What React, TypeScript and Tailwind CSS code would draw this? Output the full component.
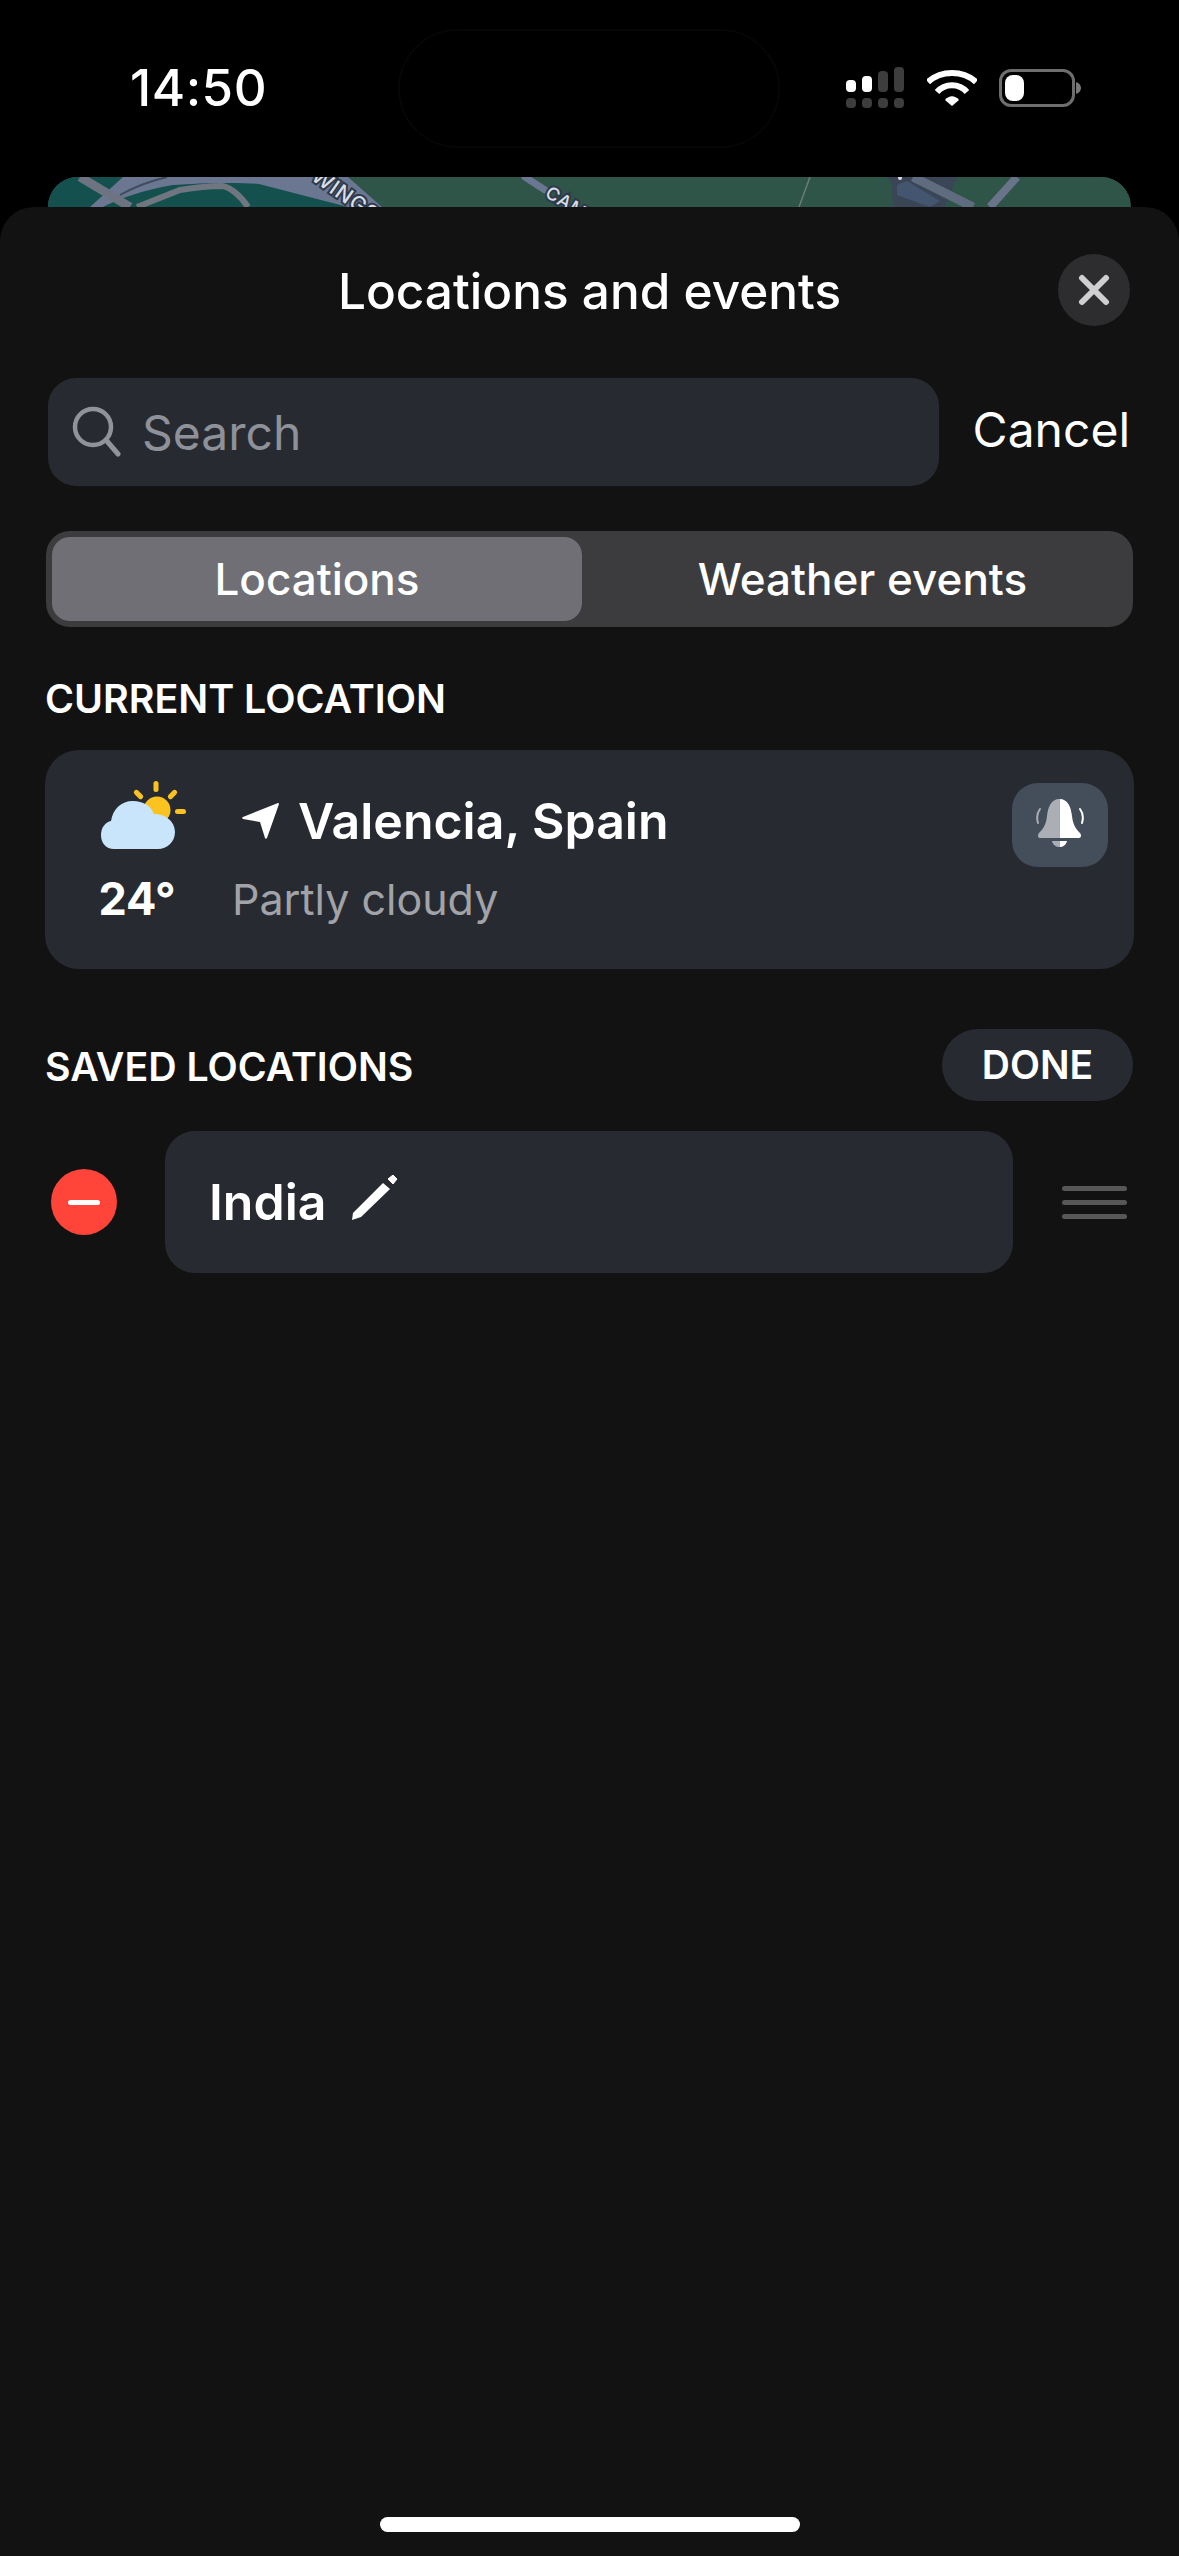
const F = "font-['Inter','Liberation_Sans',sans-serif]";

function Signal() {
  return (
    <svg width="60" height="42" viewBox="0 0 60 42" className="block">
      <rect x="0" y="13" width="10" height="12" rx="4" fill="#fff" />
      <rect x="16" y="9" width="10" height="16" rx="4" fill="#fff" />
      <rect x="32" y="4" width="10" height="21" rx="4" fill="#3d3d3d" />
      <rect x="48" y="0" width="10" height="25" rx="4" fill="#3d3d3d" />
      <rect x="0" y="31" width="10" height="10" rx="4" fill="#3d3d3d" />
      <rect x="16" y="31" width="10" height="10" rx="4" fill="#3d3d3d" />
      <rect x="32" y="31" width="10" height="10" rx="4" fill="#3d3d3d" />
      <rect x="48" y="31" width="10" height="10" rx="4" fill="#3d3d3d" />
    </svg>
  );
}

function Wifi() {
  return (
    <svg width="50" height="38" viewBox="0 0 50 38" className="block">
      <path d="M1 13 C14 1 36 1 49 13" fill="none" stroke="#fff" strokeWidth="6" />
      <path d="M10 23 C18 14 32 14 40 23" fill="none" stroke="#fff" strokeWidth="6" />
      <path d="M18 31 C22 26 28 26 32 31 L25 37 Z" fill="#fff" />
    </svg>
  );
}

function Battery() {
  return (
    <div className="flex items-center">
      <div className="w-[76px] h-[38px] rounded-[12px] border-[3px] border-[#6e6e6e] p-[3px] flex">
        <div className="w-[19px] h-full rounded-[8px] bg-white" />
      </div>
      <svg width="5" height="12" viewBox="0 0 5 12" className="ml-[1px] block">
        <path d="M0 0 C3 1 5 3 5 6 C5 9 3 11 0 12 Z" fill="#7a7a7a" />
      </svg>
    </div>
  );
}

function MapStrip() {
  return (
    <div className="h-[70px] mx-[48px] rounded-t-[30px] overflow-hidden -mb-[40px] bg-[#2f5448]">
      <svg width="1082" height="70" viewBox="0 0 1082 70" className="block">
        <rect width="1082" height="70" fill="#2f5448" />
        <path d="M0 0 H300 L334 30 H0 Z" fill="#14504e" />
        <path d="M75 0 H300 L334 30 H300 L211 7 C190 5 150 6 125 8 C95 13 70 22 55 30 H42 Z" fill="#6b7690" />
        <path d="M72 18 C88 9 102 4 119 0" stroke="#3f4c5c" strokeWidth="2" fill="none" />
        <path d="M32 0 L82 30" stroke="#6d7380" strokeWidth="9" fill="none" />
        <path d="M89 30 L132 13 C150 10 160 9 174 9 C182 10 192 18 200 30" stroke="#6f7680" strokeWidth="6" fill="none" />
        <text x="262" y="2" transform="rotate(35 262 2)" fontSize="21" fontFamily="Inter" fontWeight="500" letterSpacing="1" fill="#d8dde6" stroke="#2e3a49" strokeWidth="4" paintOrder="stroke">WINGS</text>
        <path d="M477 0 L497 13" stroke="#6b7690" strokeWidth="7" strokeLinecap="round" fill="none" />
        <text x="496" y="19" transform="rotate(32 496 19)" fontSize="18" fontFamily="Inter" fontWeight="500" letterSpacing="1" fill="#d8dde6" stroke="#2e3a49" strokeWidth="4" paintOrder="stroke">CAMI</text>
        <path d="M762 0 L751 30" stroke="#6a7d78" strokeWidth="1.5" fill="none" />
        <path d="M840 0 H909 L897 30 H845 L844 8 Z" fill="#3a4656" />
        <path d="M849 8 L859 4 L892 24 L882 30 L849 18 Z" fill="#44566f" />
        <path d="M865 0 L925 30" stroke="#5f6c80" strokeWidth="9" fill="none" />
        <path d="M969 0 L942 30" stroke="#69748a" strokeWidth="8" fill="none" />
        <circle cx="852" cy="1" r="2" fill="#d8dde6" />
      </svg>
    </div>
  );
}

export default function App() {
  return (
    <div className={`w-[1179px] h-[2556px] bg-black overflow-hidden relative text-white ${F}`}>
      <div className="h-[177px] relative">
        <div className="absolute left-[398px] top-[29px] w-[382px] h-[119px] rounded-[60px] border-2 border-[#060606]" />
        <div className="flex items-center pl-[130px] pr-[98px] pt-[60px]">
          <span className="text-[51px] leading-[56px] font-medium tracking-[0.5px]">14:50</span>
          <div className="ml-auto flex items-center">
            <Signal />
            <div className="ml-[21px]"><Wifi /></div>
            <div className="ml-[22px]"><Battery /></div>
          </div>
        </div>
      </div>

      <MapStrip />

      <div className="relative h-[2349px] bg-[#121212] rounded-t-[34px]">
        <div className="h-[171px] relative flex justify-center pt-[54px]">
          <span className="text-[49.5px] leading-[60px] font-medium">Locations and events</span>
          <div className="absolute right-[49px] top-[47px] w-[72px] h-[72px] rounded-full bg-[#2d2d2f] flex items-center justify-center">
            <svg width="32" height="32" viewBox="0 0 32 32">
              <path d="M4 4 L28 28 M28 4 L4 28" stroke="#cfcfd2" strokeWidth="6" strokeLinecap="round" />
            </svg>
          </div>
        </div>

        <div className="flex items-center ml-[48px] mr-[49px]">
          <div className="w-[891px] h-[108px] rounded-[28px] bg-[#272b31] flex items-center pl-[23px]">
            <svg width="52" height="52" viewBox="0 0 52 52" className="mt-[-2px]">
              <circle cx="22" cy="22" r="18" fill="none" stroke="#90939b" strokeWidth="4.5" />
              <path d="M35 35 L47 49" stroke="#90939b" strokeWidth="5" strokeLinecap="round" />
            </svg>
            <span className="ml-[19px] text-[48px] leading-[60px] text-[#8e9199] mt-[2px]">Search</span>
          </div>
          <span className="ml-auto text-[48px] leading-[60px] mt-[-4px]">Cancel</span>
        </div>

        <div className="mt-[45px] mx-[46px] h-[96px] rounded-[24px] bg-[#3c3c3e] flex p-[6px]">
          <div className="w-[530px] rounded-[18px] bg-[#6f6f75] flex items-center justify-center">
            <span className="text-[44px] leading-[56px] font-medium">Locations</span>
          </div>
          <div className="flex-1 flex items-center justify-center pl-[16px]">
            <span className="text-[44px] leading-[56px] font-medium">Weather events</span>
          </div>
        </div>

        <div className="mt-[47px] ml-[45px] text-[39.4px] leading-[50px] font-semibold">CURRENT LOCATION</div>

        <div className="mt-[26px] mx-[45px] h-[219px] rounded-[34px] bg-[#272b31] relative flex">
          <div className="w-[187px] flex flex-col items-center shrink-0">
            <svg width="86" height="69" viewBox="0 0 86 69" className="mt-[31px] ml-[11px] block">
              <circle cx="56" cy="29" r="13.5" fill="#fbc31f" />
              <rect x="52.5" y="0" width="5" height="11" rx="2.5" fill="#fbc31f" />
              <rect x="35" y="8" width="5" height="11" rx="2.5" fill="#fbc31f" transform="rotate(-45 37.5 13.5)" />
              <rect x="69" y="8" width="5" height="11" rx="2.5" fill="#fbc31f" transform="rotate(45 71.5 13.5)" />
              <rect x="74" y="28" width="11" height="5" rx="2.5" fill="#fbc31f" />
              <path d="M13 68 C5 68 0 62 0 54 C0 46 5 41 10 40 C12 28 20 20 32 20 C42 20 50 25 53 33 C64 33 74 40 74 51 C74 61 66 68 57 68 Z" fill="#c9e5fb" />
            </svg>
            <span className="mt-[24px] ml-[-3px] text-[45px] leading-[50px] font-bold">24°</span>
          </div>
          <div className="flex-1">
            <div className="flex items-center mt-[41px]">
              <svg width="38" height="38" viewBox="0 0 38 38" className="ml-[10px] block">
                <path d="M1 15 L36 1 C37 1 37 2 37 2 L25 36 C24 37 23 37 23 36 L18 20 L1 17 C0 16 0 15 1 15 Z" fill="#fff" />
              </svg>
              <span className="ml-[18px] text-[50px] leading-[60px] font-semibold">Valencia, Spain</span>
            </div>
            <div className="text-[43px] leading-[56px] text-[#a1a3a8] mt-[20px]">Partly cloudy</div>
          </div>
          <div className="absolute right-[26px] top-[33px] w-[96px] h-[84px] rounded-[26px] bg-[#434e5a] flex items-center justify-center">
            <svg width="50" height="50" viewBox="0 0 50 50" className="block mt-[-4px]">
              <path d="M24.5 1 C33 1 36 9 37 18 C38 27 41 31 45 35 C47 38 46 40 43 40 H24.5 Z" fill="#fff" />
              <path d="M24.5 1 C16 1 13 9 12 18 C11 27 8 31 4 35 C2 38 3 40 6 40 H24.5 Z" fill="#abaeb4" />
              <path d="M24.5 43 H32 C31 47 28 49 24.5 49 Z" fill="#fff" />
              <path d="M24.5 43 H17 C18 47 21 49 24.5 49 Z" fill="#abaeb4" />
              <path d="M3 25 C1.5 20 2 15 5 11" fill="none" stroke="#abaeb4" strokeWidth="2" strokeLinecap="round" />
              <path d="M47 25 C48.5 20 48 15 45 11" fill="none" stroke="#fff" strokeWidth="2" strokeLinecap="round" />
            </svg>
          </div>
        </div>

        <div className="mt-[60px] ml-[45px] mr-[46px] flex items-center justify-between">
          <span className="text-[39.3px] leading-[50px] font-semibold mt-[4px]">SAVED LOCATIONS</span>
          <div className="w-[191px] h-[72px] rounded-[36px] bg-[#272b31] flex items-center justify-center">
            <span className="text-[39px] leading-[50px] font-semibold">DONE</span>
          </div>
        </div>

        <div className="mt-[30px] flex items-center ml-[51px]">
          <div className="w-[66px] h-[66px] rounded-full bg-[#ff453a] flex items-center justify-center">
            <div className="w-[32px] h-[5px] rounded-full bg-white" />
          </div>
          <div className="ml-[48px] w-[848px] h-[142px] rounded-[30px] bg-[#272b31] flex items-center pl-[44px]">
            <span className="text-[50px] leading-[60px] font-semibold">India</span>
            <svg width="46" height="46" viewBox="0 0 46 46" className="ml-[26px] mt-[-8px] block">
              <path d="M0 45 L1 38 L31 8 L38 14 L9 42 Z" fill="#fff" />
              <path d="M36 4 L41 0 L45 4 L41 9 Z" fill="#fff" stroke="#fff" strokeWidth="1" strokeLinejoin="round" />
            </svg>
          </div>
          <div className="ml-[49px] w-[65px] flex flex-col gap-[9px]">
            <div className="h-[5px] rounded-full bg-[#575757]" />
            <div className="h-[5px] rounded-full bg-[#575757]" />
            <div className="h-[5px] rounded-full bg-[#575757]" />
          </div>
        </div>

        <div className="absolute left-[380px] bottom-[24px] w-[420px] h-[15px] rounded-[8px] bg-white" />
      </div>
    </div>
  );
}
